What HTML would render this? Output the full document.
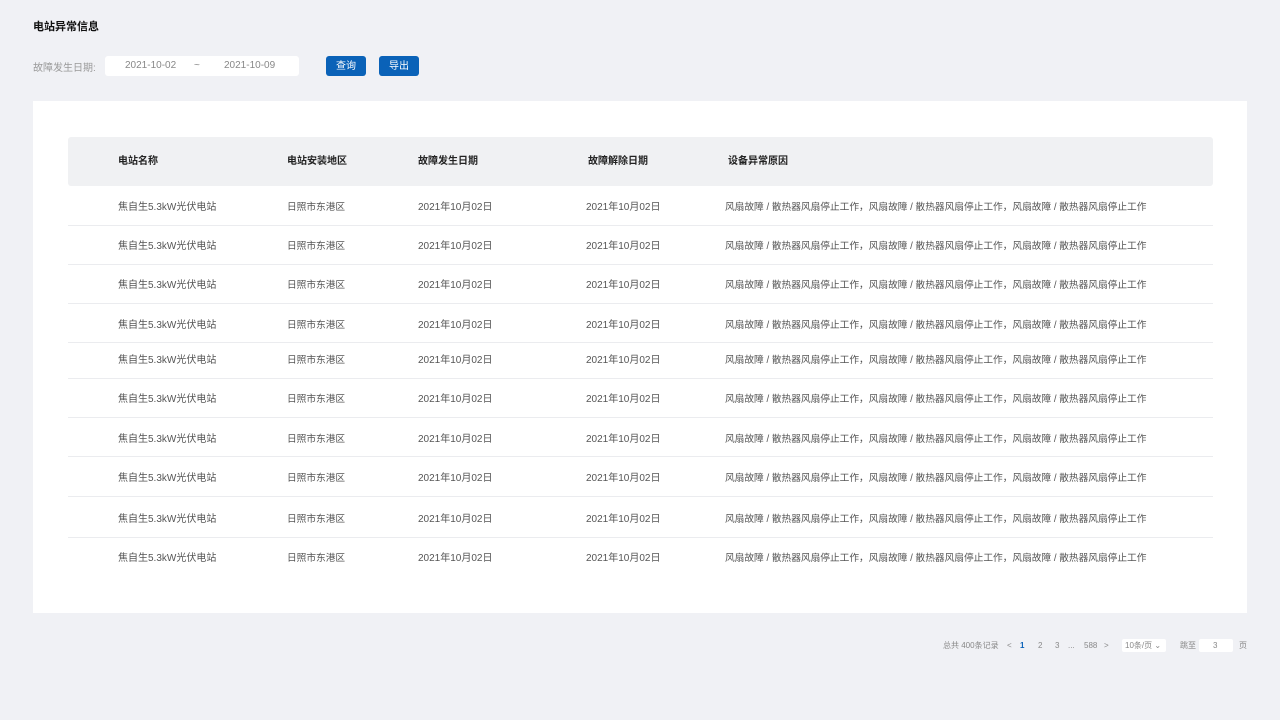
<!DOCTYPE html>
<html><head><meta charset="utf-8"><style>
*{margin:0;padding:0;box-sizing:border-box}
body{width:1280px;height:720px;background:#f0f1f5;font-family:"Liberation Sans","Noto Sans CJK SC",sans-serif;position:relative;overflow:hidden;color:#333}
.a{position:absolute;white-space:nowrap}
.t{font-size:10px;color:#555;line-height:12px}
.h{font-size:10px;font-weight:bold;color:#222;line-height:12px}
.btn{position:absolute;top:56px;width:40px;height:20px;background:#0a62b8;border-radius:3px;color:#fff;font-size:10px;text-align:center;line-height:22px}
.line{position:absolute;left:68px;width:1145px;height:1px;background:#ebecef}
.p{font-size:8px;color:#888;line-height:10px}
</style></head><body>
<div class="a" style="left:33px;top:18px;font-size:11px;font-weight:bold;color:#111">电站异常信息</div>
<div class="a" style="left:33px;top:59px;font-size:10px;color:#999">故障发生日期:</div>
<div class="a" style="left:105px;top:56px;width:194px;height:20px;background:#fff;border-radius:3px"></div>
<div class="a" style="left:125px;top:60px;font-size:10px;color:#888">2021-10-02</div>
<div class="a" style="left:194px;top:60px;font-size:10px;color:#888">~</div>
<div class="a" style="left:224px;top:60px;font-size:10px;color:#888">2021-10-09</div>
<div class="btn" style="left:326px">查询</div>
<div class="btn" style="left:379px">导出</div>
<div class="a" style="left:33px;top:101px;width:1214px;height:512px;background:#fff"></div>
<div class="a" style="left:68px;top:137px;width:1145px;height:49px;background:#f0f1f3;border-radius:3px"></div>
<div class="a h" style="left:118px;top:156px">电站名称</div>
<div class="a h" style="left:287px;top:156px">电站安装地区</div>
<div class="a h" style="left:418px;top:156px">故障发生日期</div>
<div class="a h" style="left:588px;top:156px">故障解除日期</div>
<div class="a h" style="left:728px;top:156px">设备异常原因</div>
<div id="rows"></div>
<div class="line" style="top:225px"></div><div class="line" style="top:264px"></div><div class="line" style="top:303px"></div><div class="line" style="top:342px"></div><div class="line" style="top:378px"></div><div class="line" style="top:417px"></div><div class="line" style="top:456px"></div><div class="line" style="top:496px"></div><div class="line" style="top:537px"></div>
<script>
var ys=[207,246,285,325,360,399,439,478,519,558],h='';
ys.forEach(function(y){var t=y-5;
h+='<div class="a t" style="left:118px;top:'+t+'px">焦自生5.3kW光伏电站</div><div class="a t" style="left:287px;top:'+t+'px;font-size:9.7px">日照市东港区</div><div class="a t" style="left:418px;top:'+t+'px">2021年10月02日</div><div class="a t" style="left:586px;top:'+t+'px">2021年10月02日</div><div class="a t" style="left:725px;top:'+t+'px;font-size:9.7px">风扇故障 / 散热器风扇停止工作，风扇故障 / 散热器风扇停止工作，风扇故障 / 散热器风扇停止工作</div>';});
document.getElementById('rows').innerHTML=h;
</script>
<div class="a p" style="left:943px;top:641px">总共 400条记录</div>
<div class="a p" style="left:1007px;top:641px">&lt;</div>
<div class="a p" style="left:1020px;top:641px;color:#0a62b8;font-weight:bold">1</div>
<div class="a p" style="left:1038px;top:641px">2</div>
<div class="a p" style="left:1055px;top:641px">3</div>
<div class="a p" style="left:1068px;top:641px">...</div>
<div class="a p" style="left:1084px;top:641px">588</div>
<div class="a p" style="left:1104px;top:641px">&gt;</div>
<div class="a" style="left:1122px;top:639px;width:44px;height:13px;background:#fff;border-radius:2px"></div>
<div class="a p" style="left:1125px;top:641px">10条/页 ⌄</div>
<div class="a p" style="left:1180px;top:641px">跳至</div>
<div class="a" style="left:1199px;top:639px;width:34px;height:13px;background:#fff;border-radius:2px"></div>
<div class="a p" style="left:1213px;top:641px">3</div>
<div class="a p" style="left:1239px;top:641px">页</div>
</body></html>
